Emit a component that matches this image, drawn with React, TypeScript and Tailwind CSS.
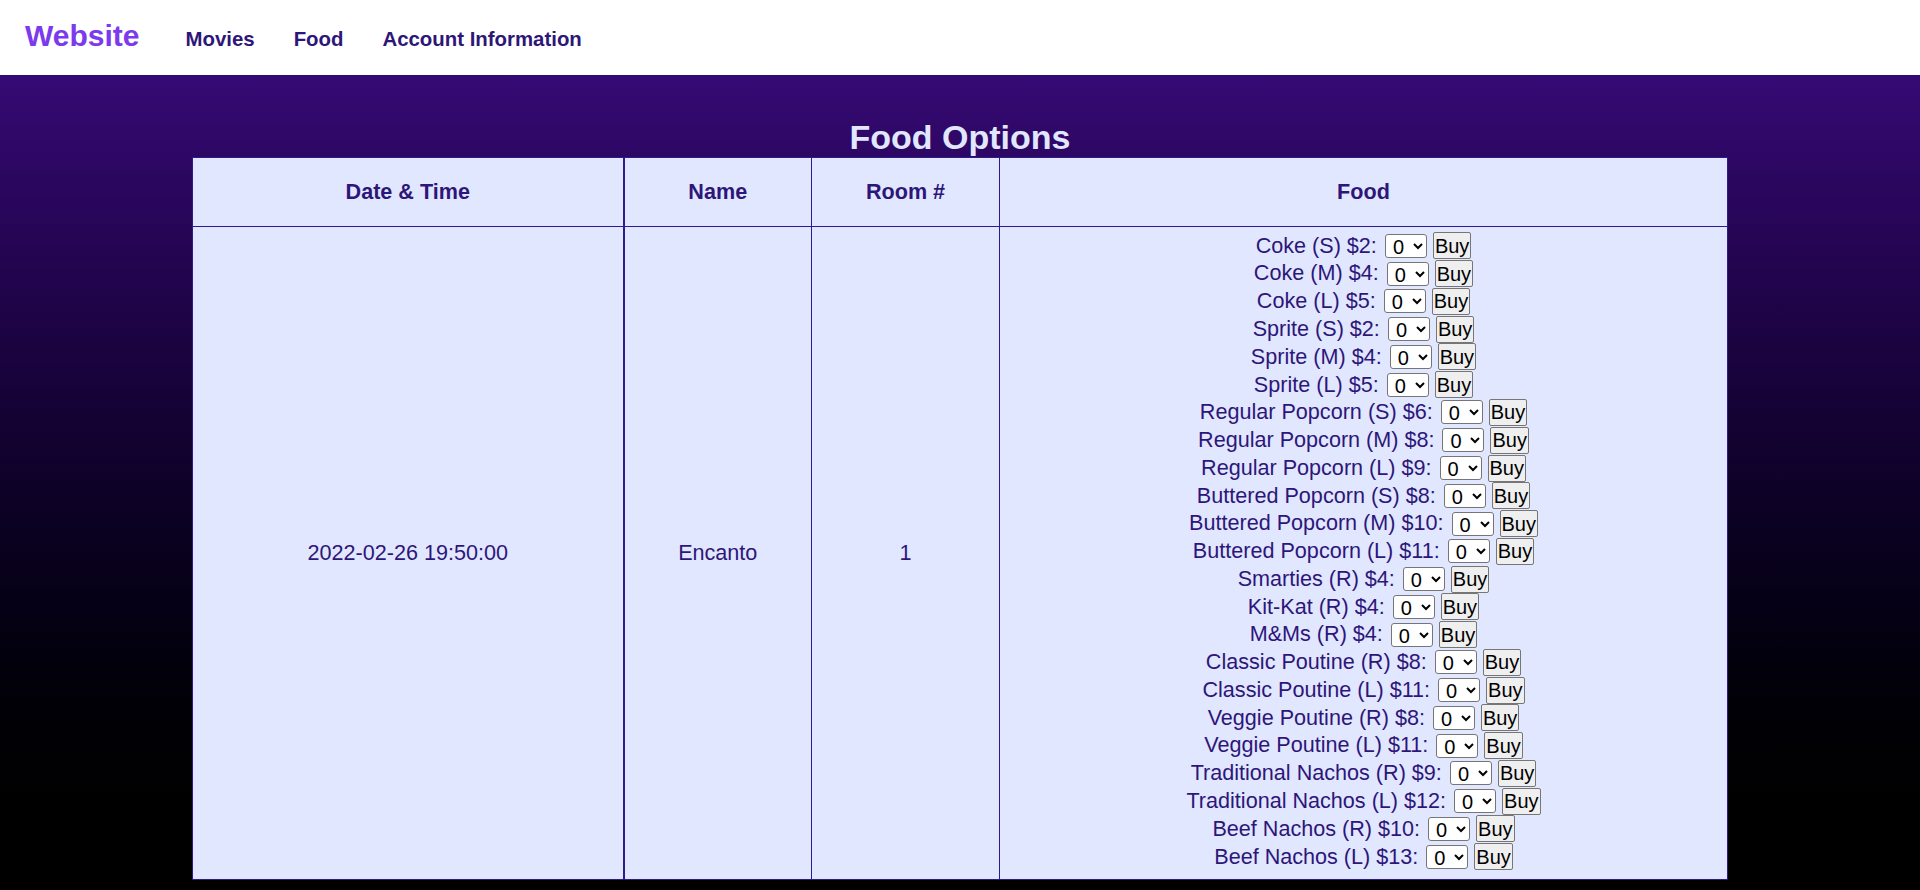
import React from "react";

const items: [string, number][] = [
  ["Coke (S) $2:", 0],
  ["Coke (M) $4:", 0],
  ["Coke (L) $5:", 0],
  ["Sprite (S) $2:", 0],
  ["Sprite (M) $4:", 0],
  ["Sprite (L) $5:", 0],
  ["Regular Popcorn (S) $6:", 0],
  ["Regular Popcorn (M) $8:", 0],
  ["Regular Popcorn (L) $9:", 0],
  ["Buttered Popcorn (S) $8:", 0],
  ["Buttered Popcorn (M) $10:", 0],
  ["Buttered Popcorn (L) $11:", 0],
  ["Smarties (R) $4:", 0],
  ["Kit-Kat (R) $4:", 0],
  ["M&Ms (R) $4:", 0],
  ["Classic Poutine (R) $8:", 0],
  ["Classic Poutine (L) $11:", 0],
  ["Veggie Poutine (R) $8:", 0],
  ["Veggie Poutine (L) $11:", 0],
  ["Traditional Nachos (R) $9:", 0],
  ["Traditional Nachos (L) $12:", 0],
  ["Beef Nachos (R) $10:", 0],
  ["Beef Nachos (L) $13:", 0],
];

function FoodRow({ label }: { label: string }) {
  return (
    <div className="flex h-[27.77px] items-center justify-center">
      <span>{label}</span>
      <select
        defaultValue="0"
        className="ml-[8px] h-[24px] w-[42px] rounded-[3px] border border-[#767676] bg-white pl-[3px] text-[20px] leading-none text-black"
      >
        {[0, 1, 2, 3, 4, 5].map((n) => (
          <option key={n} value={String(n)}>
            {n}
          </option>
        ))}
      </select>
      <button className="ml-[6px] h-[27px] rounded-[2px] border border-[#767676] bg-[#efefef] px-[1px] text-[20px] leading-none text-black">
        Buy
      </button>
    </div>
  );
}

export default function App() {
  return (
    <div className="font-['Liberation_Sans',Arial,sans-serif]">
      <header className="flex h-[75px] items-center bg-white px-[25px]">
        <div className="flex items-baseline pb-[5px]">
          <span className="text-[30px] font-bold text-[#7c3aed]">Website</span>
          <nav className="ml-[46px] flex items-baseline gap-[39px] text-[20.4px] font-bold text-[#2e1679]">
            <span>Movies</span>
            <span>Food</span>
            <span>Account Information</span>
          </nav>
        </div>
      </header>
      <main className="min-h-[815px] bg-linear-to-b from-[#360a74] to-black pb-[11px] pt-[42px]">
        <h1 className="text-center text-[34px] font-bold leading-[40px] text-[#e0e7ff]">
          Food Options
        </h1>
        <table className="mx-auto w-[1535px] table-fixed border-collapse border border-[#2e1a8a] bg-[#e0e7ff] text-[21.6px] text-[#2e1679]">
          <colgroup>
            <col className="w-[431px]" />
            <col className="w-[188px]" />
            <col className="w-[188px]" />
            <col className="w-[728px]" />
          </colgroup>
          <thead>
            <tr className="h-[69px] border-b border-[#2e1a8a]">
              <th className="border-r-2 border-[#2e1a8a] font-bold">Date &amp; Time</th>
              <th className="border-r border-[#2e1a8a] font-bold">Name</th>
              <th className="border-r border-[#2e1a8a] font-bold">Room #</th>
              <th className="font-bold">Food</th>
            </tr>
          </thead>
          <tbody>
            <tr>
              <td className="border-r-2 border-[#2e1a8a] text-center align-middle">2022-02-26 19:50:00</td>
              <td className="border-r border-[#2e1a8a] text-center align-middle">Encanto</td>
              <td className="border-r border-[#2e1a8a] text-center align-middle">1</td>
              <td className="pb-[8px] pt-[5px] text-center">
                {items.map(([label]) => (
                  <FoodRow key={label} label={label} />
                ))}
              </td>
            </tr>
          </tbody>
        </table>
      </main>
    </div>
  );
}
